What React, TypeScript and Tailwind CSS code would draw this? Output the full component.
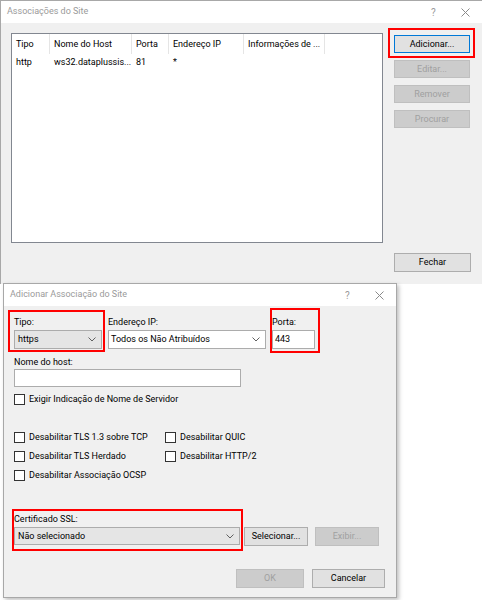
import React from "react";

function CloseGlyph() {
  return (
    <svg width="9" height="9" viewBox="0 0 9 9" className="block">
      <path d="M0.5 0.5 L8.5 8.5 M8.5 0.5 L0.5 8.5" stroke="#8a8a8a" strokeWidth="1" fill="none" />
    </svg>
  );
}

function Chevron() {
  return (
    <svg width="8" height="5" viewBox="0 0 8 5" className="block">
      <path d="M0.5 0.5 L4 4 L7.5 0.5" stroke="#606060" strokeWidth="1" fill="none" />
    </svg>
  );
}

function TitleBar({ title }: { title: string }) {
  return (
    <div className="flex h-[22px] items-center bg-white pl-[6px]">
      <span className="whitespace-nowrap text-[9px] text-[#9a9a9a]">{title}</span>
      <span className="ml-auto w-[6px] text-[10px] text-[#9a9a9a]">?</span>
      <span className="ml-[24px] mr-[12px] w-[9px]">
        <CloseGlyph />
      </span>
    </div>
  );
}

type BtnKind = "normal" | "default" | "disabled";

function Btn({ label, kind = "normal", cls = "" }: { label: string; kind?: BtnKind; cls?: string }) {
  const look =
    kind === "default"
      ? "border-[#0078d7] bg-[#e1e1e1] text-black"
      : kind === "disabled"
      ? "border-[#bfbfbf] bg-[#cccccc] text-[#a0a0a0]"
      : "border-[#adadad] bg-[#e1e1e1] text-black";
  return (
    <div className={`flex items-center justify-center whitespace-nowrap border text-[9px] leading-none ${look} ${cls}`}>
      {label}
    </div>
  );
}

function Check({ label }: { label: string }) {
  return (
    <div className="flex h-[11px] items-center">
      <div className="h-[11px] w-[11px] shrink-0 border border-[#333333] bg-white" />
      <span className="ml-[4px] whitespace-nowrap text-[9px] leading-none text-black">{label}</span>
    </div>
  );
}

function Field({ label, gap, children }: { label: string; gap: string; children: React.ReactNode }) {
  return (
    <div className="flex flex-col">
      <span className={`h-[14px] whitespace-nowrap text-[9px] leading-[14px] text-black ${gap}`}>{label}</span>
      {children}
    </div>
  );
}

const columns = [
  { name: "Tipo", w: "w-[38px]" },
  { name: "Nome do Host", w: "w-[82px]" },
  { name: "Porta", w: "w-[37px]" },
  { name: "Endereço IP", w: "w-[75px]" },
  { name: "Informações de ...", w: "w-[81px]" },
];

const row = ["http", "ws32.dataplussis...", "81", "*", ""];

export default function App() {
  return (
    <div className="relative h-[600px] w-[482px] overflow-hidden bg-white font-['Roboto',sans-serif] text-black">
      {/* Site bindings window */}
      <div className="flex h-[284px] w-[482px] flex-col border-l border-t border-[#a8a8a8] bg-[#f0f0f0]">
        <TitleBar title="Associações do Site" />
        <div className="flex">
          <div className="ml-[10px] mt-[10px] h-[210px] w-[372px] border border-[#828790] bg-white">
            <div className="flex h-[20px]">
              {columns.map((c) => (
                <div key={c.name} className={`flex items-center overflow-hidden border-r border-[#e5e5e5] pl-[4px] ${c.w}`}>
                  <span className="whitespace-nowrap text-[9px] leading-none">{c.name}</span>
                </div>
              ))}
            </div>
            <div className="flex h-[17px]">
              {row.map((v, i) => (
                <div key={i} className={`flex items-center overflow-hidden pl-[4px] ${columns[i].w}`}>
                  <span className="whitespace-nowrap text-[9px] leading-none">{v}</span>
                </div>
              ))}
            </div>
          </div>
          <div className="ml-[11px] mt-[12px] flex flex-col gap-[7px]">
            <Btn label="Adicionar..." kind="default" cls="h-[18px] w-[76px]" />
            <Btn label="Editar..." kind="disabled" cls="h-[18px] w-[76px]" />
            <Btn label="Remover" kind="disabled" cls="h-[18px] w-[76px]" />
            <Btn label="Procurar" kind="disabled" cls="h-[18px] w-[76px]" />
          </div>
        </div>
        <div className="mt-[10px] flex justify-end pr-[11px]">
          <Btn label="Fechar" cls="h-[19px] w-[77px]" />
        </div>
      </div>

      {/* Add binding window */}
      <div className="ml-[3px] mt-[-1px] flex h-[315px] w-[394px] flex-col border border-[#a8a8a8] bg-[#f0f0f0] shadow-[2px_2px_4px_rgba(0,0,0,0.25)]">
        <TitleBar title="Adicionar Associação do Site" />
        <div className="flex flex-col pl-[10px]">
          <div className="mt-[9px] flex gap-[6px]">
            <Field label="Tipo:" gap="mb-[1px]">
              <div className="flex h-[19px] w-[88px] items-center border border-[#acacac] bg-[#e5e5e5] pl-[3px] pr-[5px]">
                <span className="text-[9px] leading-none">https</span>
                <span className="ml-auto"><Chevron /></span>
              </div>
            </Field>
            <Field label="Endereço IP:" gap="mb-[1px]">
              <div className="flex h-[19px] w-[158px] items-center border border-[#acacac] bg-white pl-[2px] pr-[5px]">
                <span className="whitespace-nowrap text-[9px] leading-none">Todos os Não Atribuídos</span>
                <span className="ml-auto"><Chevron /></span>
              </div>
            </Field>
            <Field label="Porta:" gap="mb-[1px]">
              <div className="flex h-[19px] w-[43px] items-center border border-[#acacac] bg-white pl-[2px]">
                <span className="text-[9px] leading-none">443</span>
              </div>
            </Field>
          </div>

          <div className="mt-[6px]">
            <Field label="Nome do host:" gap="mb-0">
              <div className="h-[18px] w-[227px] border border-[#acacac] bg-white" />
            </Field>
          </div>

          <div className="mt-[7px]">
            <Check label="Exigir Indicação de Nome de Servidor" />
          </div>

          <div className="mt-[27px] grid w-[300px] grid-cols-[151px_1fr] gap-y-[8px]">
            <Check label="Desabilitar TLS 1.3 sobre TCP" />
            <Check label="Desabilitar QUIC" />
            <Check label="Desabilitar TLS Herdado" />
            <Check label="Desabilitar HTTP/2" />
            <Check label="Desabilitar Associação OCSP" />
          </div>

          <div className="mt-[31px] flex items-end gap-[4px]">
            <Field label="Certificado SSL:" gap="mb-[1px]">
              <div className="flex h-[18px] w-[226px] items-center border border-[#acacac] bg-[#e5e5e5] pl-[3px] pr-[5px]">
                <span className="whitespace-nowrap text-[9px] leading-none">Não selecionado</span>
                <span className="ml-auto"><Chevron /></span>
              </div>
            </Field>
            <div className="mb-[-1px] flex gap-[7px]">
              <Btn label="Selecionar..." cls="h-[19px] w-[64px]" />
              <Btn label="Exibir..." kind="disabled" cls="h-[19px] w-[64px]" />
            </div>
          </div>

          <div className="mt-[24px] flex justify-end gap-[8px] pr-[11px]">
            <Btn label="OK" kind="disabled" cls="h-[19px] w-[68px]" />
            <Btn label="Cancelar" cls="h-[19px] w-[73px]" />
          </div>
        </div>
      </div>

      {/* Red call-out frames */}
      <div className="pointer-events-none absolute left-[388px] top-[28px] h-[30px] w-[87px] border-2 border-[#ff0000]" />
      <div className="pointer-events-none absolute left-[8px] top-[310px] h-[42px] w-[97px] border-2 border-[#ff0000]" />
      <div className="pointer-events-none absolute left-[270px] top-[308px] h-[45px] w-[50px] border-2 border-[#ff0000]" />
      <div className="pointer-events-none absolute left-[12px] top-[509px] h-[42px] w-[231px] border-2 border-[#ff0000]" />
    </div>
  );
}
